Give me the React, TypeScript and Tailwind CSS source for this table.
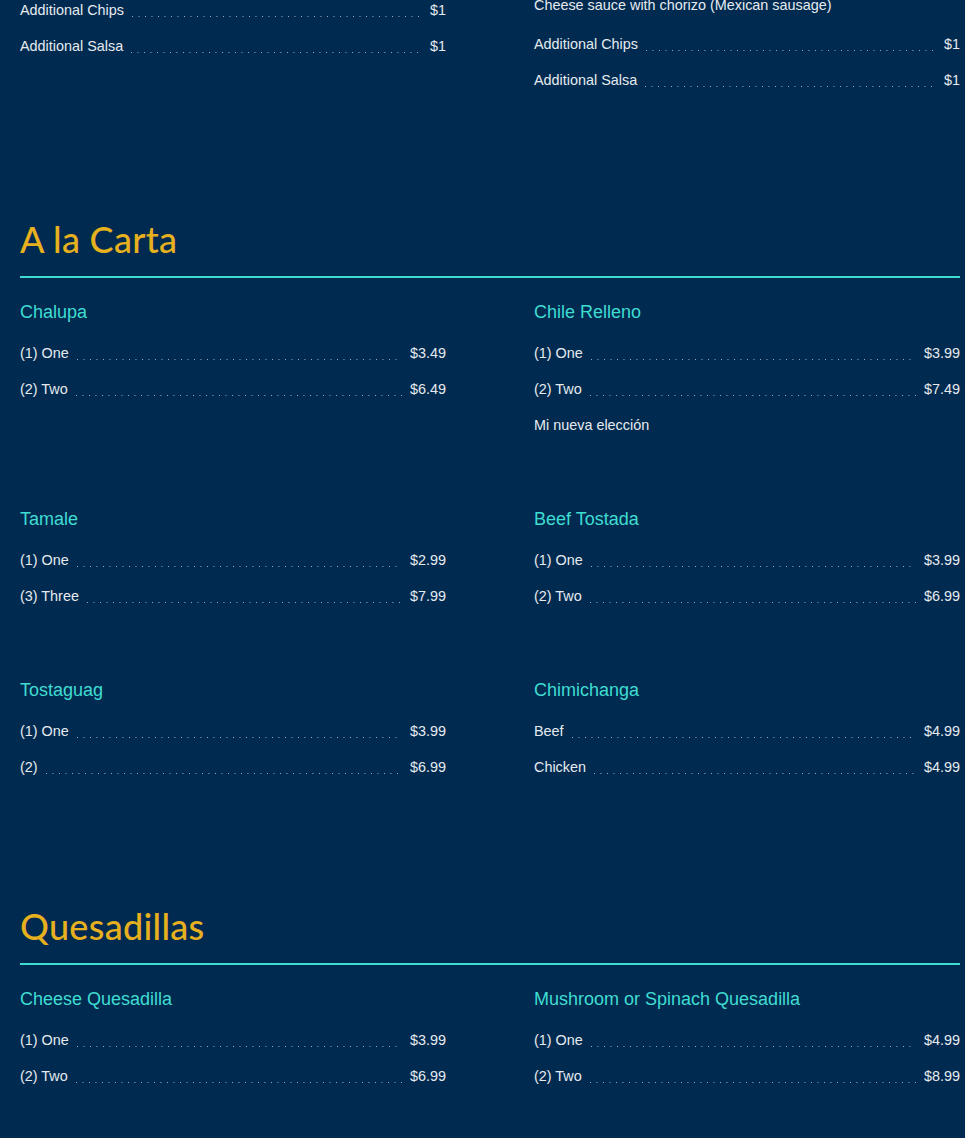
import React from 'react';

type Row = { name: string; price?: string };
type Group = { title?: string; rows: Row[]; footer?: string };

const sections: { title: string; groups: Group[] }[] = [
  {
    title: 'A la Carta',
    groups: [
      { title: 'Chalupa', rows: [{ name: '(1) One', price: '$3.49' }, { name: '(2) Two', price: '$6.49' }] },
      {
        title: 'Chile Relleno',
        rows: [{ name: '(1) One', price: '$3.99' }, { name: '(2) Two', price: '$7.49' }],
        footer: 'Mi nueva elección',
      },
      { title: 'Tamale', rows: [{ name: '(1) One', price: '$2.99' }, { name: '(3) Three', price: '$7.99' }] },
      { title: 'Beef Tostada', rows: [{ name: '(1) One', price: '$3.99' }, { name: '(2) Two', price: '$6.99' }] },
      { title: 'Tostaguag', rows: [{ name: '(1) One', price: '$3.99' }, { name: '(2)', price: '$6.99' }] },
      { title: 'Chimichanga', rows: [{ name: 'Beef', price: '$4.99' }, { name: 'Chicken', price: '$4.99' }] },
    ],
  },
  {
    title: 'Quesadillas',
    groups: [
      { title: 'Cheese Quesadilla', rows: [{ name: '(1) One', price: '$3.99' }, { name: '(2) Two', price: '$6.99' }] },
      {
        title: 'Mushroom or Spinach Quesadilla',
        rows: [{ name: '(1) One', price: '$4.99' }, { name: '(2) Two', price: '$8.99' }],
      },
    ],
  },
];

function ItemRow({ row }: { row: Row }) {
  return (
    <div className="flex h-9 items-center pt-[2px] text-[14.4px] text-[#e6eaef]">
      <span className="whitespace-nowrap">{row.name}</span>
      <span className="mx-2 mt-[10px] h-[1px] flex-1 bg-[linear-gradient(to_right,rgba(230,236,243,0.7)_1px,transparent_1px)] bg-[length:6.5px_1px] bg-repeat-x" />
      <span className="whitespace-nowrap">{row.price}</span>
    </div>
  );
}

function MenuGroup({ group }: { group: Group }) {
  return (
    <div>
      {group.title && (
        <h3 className="mb-[9px] pt-[1px] text-[18px] leading-[28px] text-[#3fdcd2]">{group.title}</h3>
      )}
      {group.rows.map((r, i) => (
        <ItemRow key={i} row={r} />
      ))}
      {group.footer && (
        <div className="flex h-9 items-center pt-[2px] text-[14.4px] text-[#e6eaef]">{group.footer}</div>
      )}
    </div>
  );
}

export default function App() {
  return (
    <div
      className="min-h-[1138px] overflow-hidden bg-[#002a4f]"
      style={{ fontFamily: "'Liberation Sans', Arial, sans-serif" }}
    >
      <div className="w-[960px] pl-[20px]">
        {/* tail of the previous section */}
        <div className="-mt-[8px] mb-[119px] grid grid-cols-2 gap-x-[88px]">
          <div>
            <ItemRow row={{ name: 'Additional Chips', price: '$1' }} />
            <ItemRow row={{ name: 'Additional Salsa', price: '$1' }} />
          </div>
          <div className="pt-[2px]">
            <div className="mb-[10px] h-[22px] text-[14.4px] leading-[22px] text-[#e6eaef]">
              Cheese sauce with chorizo (Mexican sausage)
            </div>
            <ItemRow row={{ name: 'Additional Chips', price: '$1' }} />
            <ItemRow row={{ name: 'Additional Salsa', price: '$1' }} />
          </div>
        </div>

        {sections.map((s) => (
          <section key={s.title} className="mb-[119px]">
            <h2
              className="border-b-2 border-[#3fdcd2] pb-[15px] text-[36px] font-medium leading-[44px] tracking-[0.3px] text-[#e6b01f]"
              style={{ fontFamily: "Lato, 'Open Sans', sans-serif" }}
            >
              {s.title}
            </h2>
            <div className="mt-[19px] grid grid-cols-2 gap-x-[88px] gap-y-[61px]">
              {s.groups.map((g, i) => (
                <MenuGroup key={i} group={g} />
              ))}
            </div>
          </section>
        ))}
      </div>
    </div>
  );
}
